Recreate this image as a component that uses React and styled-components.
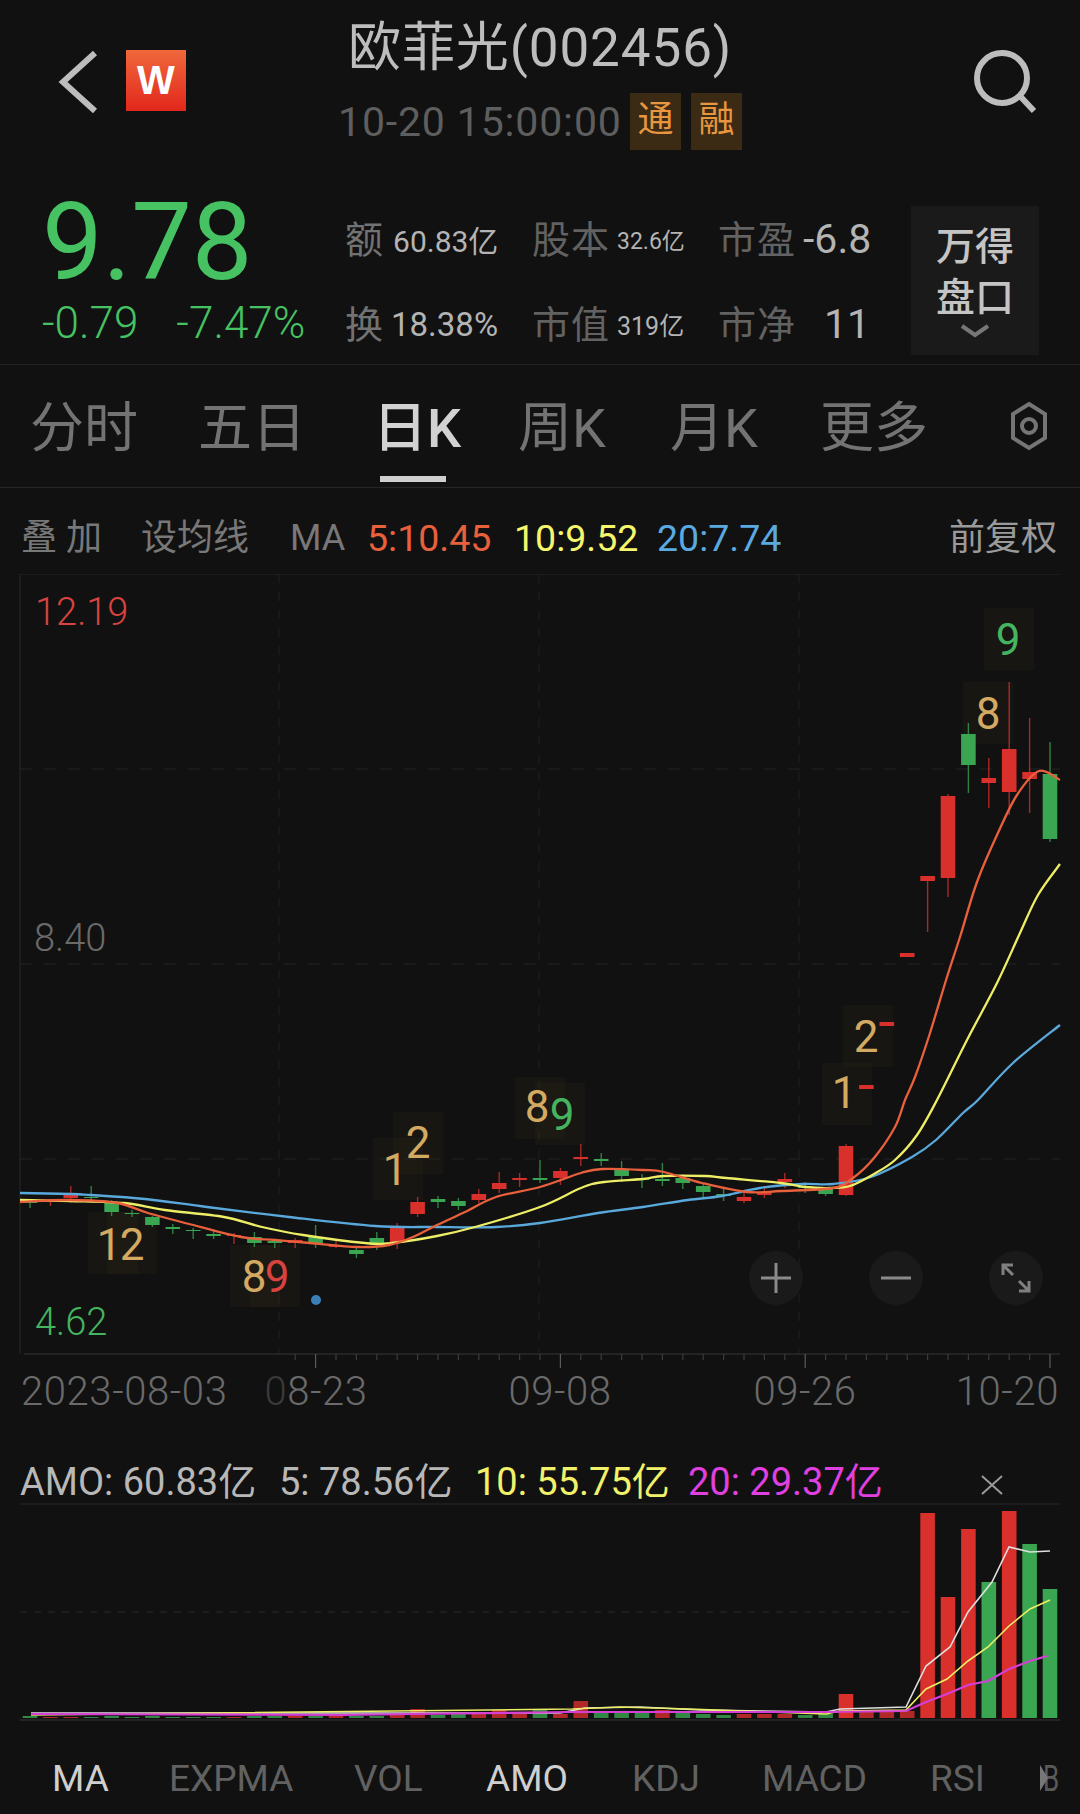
import React from 'react'
import styled, { createGlobalStyle } from 'styled-components'

const GlobalStyle = createGlobalStyle`
  html, body { margin: 0; padding: 0; background: #111111; }
  body { font-family: Roboto, "Noto Sans CJK SC", sans-serif; }
`

const GRAY = '#6a6a6a'
const RED = '#d9302c'
const GREEN = '#3aa651'
const GOLD = '#d4aa63'

// x position of the n-th daily bar
const barX = (i) => 30 + 20.4 * i

// [index, colour, wick top, wick bottom, body top, body bottom]
const candles = [
  [0, 'g', 1199, 1208, 1201, 1203], [1, 'r', 1199, 1206, 1200, 1202], [2, 'r', 1186, 1203, 1194, 1198],
  [3, 'g', 1186, 1200, 1197, 1198], [4, 'g', 1200, 1216, 1203, 1212], [5, 'g', 1210, 1217, 1213, 1214],
  [6, 'g', 1216, 1227, 1217, 1225], [7, 'g', 1224, 1234, 1227, 1229], [8, 'g', 1228, 1239, 1230, 1231],
  [9, 'g', 1231, 1239, 1234, 1236], [10, 'r', 1233, 1244, 1235, 1236], [11, 'g', 1232, 1247, 1237, 1243],
  [12, 'g', 1240, 1248, 1241, 1243], [13, 'r', 1238, 1248, 1240, 1243], [14, 'g', 1225, 1248, 1237, 1243],
  [15, 'r', 1241, 1248, 1245, 1247], [16, 'g', 1247, 1258, 1250, 1254], [17, 'g', 1232, 1250, 1238, 1245],
  [18, 'r', 1223, 1249, 1228, 1243], [19, 'r', 1197, 1217, 1202, 1214], [20, 'g', 1196, 1208, 1199, 1202],
  [21, 'g', 1198, 1210, 1201, 1206], [22, 'r', 1189, 1203, 1194, 1200], [23, 'r', 1172, 1193, 1183, 1189],
  [24, 'r', 1173, 1187, 1178, 1180], [25, 'g', 1160, 1183, 1178, 1180], [26, 'r', 1168, 1185, 1171, 1178],
  [27, 'r', 1144, 1166, 1157, 1159], [28, 'g', 1153, 1166, 1159, 1161], [29, 'g', 1161, 1182, 1170, 1176],
  [30, 'g', 1174, 1188, 1178, 1180], [31, 'g', 1163, 1186, 1179, 1181], [32, 'g', 1177, 1189, 1178, 1183],
  [33, 'g', 1183, 1197, 1186, 1192], [34, 'g', 1188, 1201, 1194, 1196], [35, 'r', 1193, 1203, 1197, 1201],
  [36, 'r', 1186, 1198, 1192, 1195], [37, 'r', 1173, 1188, 1179, 1182], [38, 'g', 1182, 1193, 1186, 1188],
  [39, 'g', 1187, 1196, 1189, 1194], [40, 'r', 1144, 1196, 1146, 1195], [41, 'r', 1085, 1089, 1085, 1089],
  [42, 'r', 1022, 1026, 1022, 1026], [43, 'r', 953, 957, 953, 957], [44, 'r', 876, 932, 876, 881],
  [45, 'r', 794, 897, 796, 878], [46, 'g', 723, 793, 734, 765], [47, 'r', 758, 808, 778, 783],
  [48, 'r', 682, 815, 749, 792], [49, 'r', 718, 813, 772, 779], [50, 'g', 742, 842, 774, 839],
]

const ma5 = [[20, 1202], [70, 1200], [117, 1203], [148, 1213], [189, 1224], [241, 1237], [275, 1240], [310, 1243], [358, 1247], [389, 1245], [413, 1237], [437, 1225], [465, 1212], [496, 1197], [540, 1187], [581, 1173], [602, 1169], [643, 1170], [664, 1172], [702, 1183], [747, 1192], [781, 1191], [833, 1188], [853, 1178], [874, 1158], [895, 1127], [905, 1100], [915, 1077], [930, 1033], [947, 977], [960, 937], [977, 882], [997, 835], [1017, 795], [1039, 771], [1060, 780]]
const ma10 = [[20, 1200], [70, 1201], [124, 1203], [165, 1210], [224, 1217], [262, 1227], [303, 1235], [365, 1243], [392, 1243], [437, 1236], [475, 1227], [540, 1207], [581, 1188], [604, 1182], [643, 1179], [664, 1176], [705, 1176], [726, 1178], [781, 1183], [805, 1187], [831, 1188], [850, 1186], [874, 1174], [895, 1160], [917, 1135], [937, 1100], [967, 1040], [997, 983], [1020, 933], [1038, 895], [1060, 864]]
const ma20 = [[20, 1193], [71, 1194], [91, 1195], [145, 1199], [207, 1207], [289, 1217], [375, 1226], [437, 1227], [496, 1227], [540, 1223], [598, 1213], [643, 1207], [688, 1200], [722, 1196], [760, 1188], [802, 1184], [833, 1184], [871, 1177], [912, 1157], [936, 1140], [963, 1113], [978, 1100], [1013, 1063], [1060, 1025]]

// the TD sequence counters drawn next to the candles
const marks = [
  { boxes: [[88, 1212], [107, 1212]], text: '1', x: 109, y: 1260, color: GOLD },
  { boxes: [], text: '2', x: 132, y: 1260, color: GOLD },
  { boxes: [[230, 1245], [250, 1245]], text: '8', x: 254, y: 1292, color: GOLD },
  { boxes: [], text: '9', x: 277, y: 1292, color: '#d8433f' },
  { boxes: [[373, 1138]], text: '1', x: 395, y: 1185, color: GOLD },
  { boxes: [[393, 1112]], text: '2', x: 418, y: 1158, color: GOLD },
  { boxes: [[515, 1077]], text: '8', x: 537, y: 1122, color: GOLD },
  { boxes: [[535, 1083]], text: '9', x: 562, y: 1130, color: '#45b45f' },
  { boxes: [[822, 1063]], text: '1', x: 844, y: 1108, color: GOLD },
  { boxes: [[843, 1005]], text: '2', x: 866, y: 1052, color: GOLD },
  { boxes: [[984, 608]], text: '9', x: 1008, y: 655, color: '#45b45f' },
  { boxes: [[963, 682]], text: '8', x: 988, y: 729, color: GOLD },
]

// [index, colour, bar top]
const volumes = [
  [0, 'g', 1717], [1, 'r', 1718], [2, 'r', 1718], [3, 'g', 1718], [4, 'g', 1717], [5, 'g', 1718], [6, 'g', 1717],
  [7, 'g', 1718], [8, 'g', 1718], [9, 'g', 1718], [10, 'r', 1718], [11, 'g', 1717], [12, 'g', 1717], [13, 'r', 1717],
  [14, 'g', 1717], [15, 'r', 1717], [16, 'g', 1717], [17, 'g', 1717], [18, 'r', 1715], [19, 'r', 1710], [20, 'g', 1716],
  [21, 'g', 1715], [22, 'r', 1715], [23, 'r', 1711], [24, 'r', 1715], [25, 'g', 1710], [26, 'r', 1715], [27, 'r', 1702],
  [28, 'g', 1713], [29, 'g', 1713], [30, 'g', 1713], [31, 'r', 1711], [32, 'g', 1713], [33, 'g', 1715], [34, 'g', 1716],
  [35, 'r', 1715], [36, 'r', 1715], [37, 'r', 1715], [38, 'g', 1716], [39, 'g', 1715], [40, 'r', 1695], [41, 'r', 1712],
  [42, 'r', 1712], [43, 'r', 1712], [44, 'r', 1514], [45, 'r', 1598], [46, 'r', 1530], [47, 'g', 1583], [48, 'r', 1512],
  [49, 'g', 1545], [50, 'g', 1590],
]

const vol5 = [[31, 1714], [560, 1714], [585, 1709], [640, 1708], [700, 1711], [826, 1713], [840, 1710], [906, 1708], [926, 1667], [950, 1648], [968, 1613], [992, 1583], [1009, 1548], [1030, 1553], [1050, 1552]]
const vol10 = [[31, 1716], [572, 1710], [620, 1708], [689, 1710], [826, 1715], [840, 1712], [906, 1711], [926, 1690], [947, 1680], [968, 1662], [988, 1648], [1009, 1627], [1030, 1610], [1050, 1601]]
const vol20 = [[31, 1715], [344, 1716], [413, 1715], [572, 1713], [826, 1713], [906, 1712], [926, 1703], [947, 1695], [968, 1686], [988, 1682], [1009, 1670], [1030, 1662], [1047, 1657]]

const polyline = (pts) => pts.map((p) => p.join(',')).join(' ')

// catmull-rom through the sampled points so the averages stay round
const smooth = (pts) => {
  let d = `M${pts[0][0]} ${pts[0][1]}`
  for (let i = 0; i < pts.length - 1; i++) {
    const p0 = pts[i - 1] || pts[i]
    const p1 = pts[i]
    const p2 = pts[i + 1]
    const p3 = pts[i + 2] || p2
    const c1x = p1[0] + (p2[0] - p0[0]) / 6
    const c1y = p1[1] + (p2[1] - p0[1]) / 6
    const c2x = p2[0] - (p3[0] - p1[0]) / 6
    const c2y = p2[1] - (p3[1] - p1[1]) / 6
    d += ` C${c1x.toFixed(1)} ${c1y.toFixed(1)} ${c2x.toFixed(1)} ${c2y.toFixed(1)} ${p2[0]} ${p2[1]}`
  }
  return d
}

const Page = styled.div`
  width: 1080px;
  height: 1814px;
  overflow: hidden;
  background: #111111;
  color: #bbbbbb;
`

const TopBar = styled.header`
  height: 170px;
  display: grid;
  grid-template-columns: 338px 600px 1fr;
`
const TopLeft = styled.div`
  display: flex;
  align-items: flex-start;
  gap: 26px;
  padding: 50px 0 0 57px;
`
const Logo = styled.div`
  width: 60px;
  height: 61px;
  background: linear-gradient(#f0683c, #e2271c);
  color: #fff;
  font: 700 40px/61px "Liberation Sans", sans-serif;
  text-align: center;
`
const TopCenter = styled.div`
  padding-top: 16px;
`
const Title = styled.div`
  margin-left: 10px;
  font-size: 53px;
  line-height: 64px;
  letter-spacing: 0.9px;
  color: #bdbdbd;
`
const TimeRow = styled.div`
  display: flex;
  align-items: center;
  margin-top: 13px;
  height: 57px;
`
const Time = styled.span`
  width: 292px;
  font-size: 41px;
  letter-spacing: 0.85px;
  color: #5e5e5e;
  white-space: nowrap;
`
const Badge = styled.span`
  width: 51px;
  height: 57px;
  margin-right: 10px;
  background: #3b2a14;
  color: #e8963f;
  font-size: 36px;
  line-height: 55px;
  text-align: center;
`
const TopRight = styled.div`
  padding: 49px 0 0 33px;
`

const Quote = styled.section`
  height: 195px;
  display: grid;
  grid-template-columns: 345px 566px 128px;
  border-bottom: 1px solid #222222;
  box-sizing: border-box;
`
const PriceBlock = styled.div`
  padding-left: 42px;
  color: #46c263;
`
const Price = styled.div`
  font-size: 108px;
  line-height: 96px;
  margin-top: 24px;
`
const Change = styled.div`
  display: flex;
  gap: 38px;
  margin-top: 11px;
  font-size: 44px;
  font-weight: 300;
  line-height: 44px;
`
const Stats = styled.div`
  display: grid;
  grid-template-columns: 187px 186px 193px;
  grid-auto-rows: 85px;
  padding-top: 25px;
`
const Stat = styled.div`
  display: flex;
  align-items: center;
  height: 85px;
  gap: ${(p) => p.$gap || 7}px;
`
const StatLabel = styled.span`
  margin-top: -3px;
  font-size: 38px;
  color: ${(p) => p.$color || '#626262'};
  letter-spacing: 1px;
`
const StatValue = styled.span`
  margin-top: 3px;
  font-size: ${(p) => p.$size || 32}px;
  color: #b4b4b4;
  white-space: nowrap;
`
const DepthButton = styled.div`
  height: 149px;
  margin-top: 36px;
  background: #1a1a1a;
  display: flex;
  flex-direction: column;
  align-items: center;
  padding-top: 16px;
  box-sizing: border-box;
  font-size: 39px;
  font-weight: 500;
  line-height: 51px;
  color: #c4c4c4;
`

const Tabs = styled.nav`
  height: 123px;
  box-sizing: border-box;
  padding: 31px 0 0 30px;
  display: grid;
  grid-template-columns: 168px 175px 145px 152px 150px 190px 38px;
  border-bottom: 1px solid #262626;
  position: relative;
`
const Tab = styled.span`
  position: relative;
  font-size: 54px;
  line-height: 66px;
  color: ${(p) => (p.$active ? '#d2d2d2' : '#737373')};
  font-weight: ${(p) => (p.$active ? 500 : 400)};
`
const TabLine = styled.i`
  position: absolute;
  left: 7px;
  top: 80px;
  width: 66px;
  height: 6px;
  background: #cfcfcf;
`
const GearWrap = styled.span`
  margin-top: -3px;
`

const MaRow = styled.div`
  height: 86px;
  box-sizing: border-box;
  padding: 27px 0 0 21px;
  display: grid;
  grid-template-columns: 120px 149px 77px 147px 143px 292px 1fr;
  font-size: 36px;
  line-height: 46px;
  color: #787878;
  white-space: nowrap;
`
const MaValue = styled.span`
  color: ${(p) => p.$color};
  font-size: ${(p) => p.$size || 37.5}px;
`

const ChartWrap = styled.div`
  position: relative;
  height: 865px;
`
const ChartSvg = styled.svg`
  display: block;
`
const ChartText = styled.text`
  font-family: Roboto, sans-serif;
  font-size: ${(p) => p.$size || 38}px;
  font-weight: ${(p) => p.$weight || 300};
  letter-spacing: ${(p) => p.$spacing || 0}px;
  fill: ${(p) => p.$color};
  text-anchor: ${(p) => p.$anchor || 'start'};
`
const ZoomTools = styled.div`
  position: absolute;
  left: 749px;
  top: 677px;
  display: flex;
  gap: 66px;
`
const ZoomButton = styled.div`
  width: 54px;
  height: 54px;
  border-radius: 50%;
  background: #1a1a1a;
  display: flex;
  align-items: center;
  justify-content: center;
`

const AmoRow = styled.div`
  height: 63px;
  box-sizing: border-box;
  padding: 21px 0 0 20px;
  display: grid;
  grid-template-columns: 259px 196px 213px 292px 1fr;
  font-size: 38px;
  line-height: 44px;
  white-space: nowrap;
  color: #b8b8b8;
`
const AmoValue = styled.span`
  color: ${(p) => p.$color || 'inherit'};
`
const VolumeSvg = styled.svg`
  display: block;
`
const BottomTabs = styled.nav`
  height: 84px;
  box-sizing: border-box;
  padding: 28px 0 0 52px;
  display: grid;
  grid-template-columns: 117px 185px 132px 146px 130px 168px 110px 20px;
  font-size: 37px;
  line-height: 44px;
`
const BottomTab = styled.span`
  color: ${(p) => (p.$active ? '#cfcfcf' : '#616161')};
`
const SqueezedTab = styled.span`
  position: relative;
  padding-left: 3px;
  color: #5a5a5a;
`
const SqueezedLetter = styled.span`
  display: inline-block;
  transform: scaleX(0.7);
  transform-origin: left;
`
const MoreArrow = styled.i`
  position: absolute;
  left: 0;
  top: 8px;
  width: 0;
  height: 0;
  border-left: 8px solid #777777;
  border-top: 13px solid transparent;
  border-bottom: 13px solid transparent;
`

const Stroke = ({ children, w, h, color = '#bdbdbd', sw = 6 }) => (
  <svg width={w} height={h} viewBox={`0 0 ${w} ${h}`} fill="none" stroke={color} strokeWidth={sw}>
    {children}
  </svg>
)

const PriceChart = () => (
  <ChartSvg width="1080" height="865" viewBox="0 574 1080 865" fill="none">
    <path d="M20 574H1060M20 574V1354" stroke="#202020" strokeWidth="1.5" />
    <path d="M20 769H1060M20 964H1060M20 1159H1060" stroke="#242424" strokeWidth="1" strokeDasharray="12 12" />
    <path d="M279 574V1354M539 574V1354M799 574V1354" stroke="#212121" strokeWidth="1" strokeDasharray="9 9" />

    {marks.flatMap((m) => m.boxes).map((b) => (
      <rect key={b.join()} x={b[0]} y={b[1]} width="50" height="62" fill="#3a3220" opacity="0.17" />
    ))}

    {candles.map(([i, c, wt, wb, bt, bb]) => (
      <g key={i} fill={c === 'r' ? RED : GREEN} stroke="none">
        <rect x={barX(i) - 0.7} y={wt} width="1.4" height={wb - wt} opacity="0.75" />
        <rect x={barX(i) - 7.3} y={bt} width="14.6" height={bb - bt} />
      </g>
    ))}

    <path d={smooth(ma20)} stroke="#5aa9dc" strokeWidth="2.3" />
    <path d={smooth(ma10)} stroke="#eded66" strokeWidth="2.3" />
    <path d={smooth(ma5)} stroke="#e8603c" strokeWidth="2.3" />

    {marks.map((m) => (
      <ChartText key={`${m.x}-${m.text}`} x={m.x} y={m.y} $size={44} $weight={400} $color={m.color} $anchor="middle">
        {m.text}
      </ChartText>
    ))}

    <ChartText x="35" y="625" $color="#d8433f">12.19</ChartText>
    <ChartText x="34" y="951" $color="#6a6a6a">8.40</ChartText>
    <ChartText x="35" y="1335" $color="#45b45f">4.62</ChartText>
    <circle cx="316" cy="1300" r="5" fill="#3a7fb5" />

    <path d="M24 1354H1060" stroke="#2a2a2a" strokeWidth="1.5" />
    {candles.filter(([i]) => i >= 13).map(([i]) => (
      <rect
        key={i}
        x={barX(i) - 0.6}
        y="1354"
        width="1.2"
        height={[14, 26, 38, 50].includes(i) ? 14 : 6}
        fill={[14, 26, 38, 50].includes(i) ? '#5a5a5a' : '#3c3c3c'}
      />
    ))}

    <ChartText x="21" y="1405" $size={40} $spacing={0.6} $color={GRAY}>2023-08-03</ChartText>
    <ChartText x="316" y="1405" $size={40} $spacing={0.6} $color={GRAY} $anchor="middle">
      <tspan fill="#3a3a3a">0</tspan>8-23
    </ChartText>
    <ChartText x="560" y="1405" $size={40} $spacing={0.6} $color={GRAY} $anchor="middle">09-08</ChartText>
    <ChartText x="805" y="1405" $size={40} $spacing={0.6} $color={GRAY} $anchor="middle">09-26</ChartText>
    <ChartText x="1059" y="1405" $size={40} $spacing={0.6} $color={GRAY} $anchor="end">10-20</ChartText>
  </ChartSvg>
)

const VolumeChart = () => (
  <VolumeSvg width="1080" height="227" viewBox="0 1503 1080 227" fill="none">
    <path d="M20 1505H1060" stroke="#202020" strokeWidth="1.5" />
    <path d="M20 1613H915" stroke="#2a2a2a" strokeWidth="1" strokeDasharray="7 7" />
    <path d="M20 1721H1060" stroke="#2a2a2a" strokeWidth="1.5" />
    {volumes.map(([i, c, top]) => (
      <rect
        key={i}
        x={barX(i) - 7.3}
        y={top}
        width="14.6"
        height={1719 - top}
        fill={c === 'r' ? RED : GREEN}
        opacity={i < 44 && i !== 40 ? 0.8 : 1}
      />
    ))}
    <polyline points={polyline(vol5)} stroke="#dedede" strokeWidth="1.6" />
    <polyline points={polyline(vol10)} stroke="#eded66" strokeWidth="1.6" />
    <polyline points={polyline(vol20)} stroke="#d63fd6" strokeWidth="2.2" />
  </VolumeSvg>
)

export default function App() {
  return (
    <Page>
      <GlobalStyle />
      <TopBar>
        <TopLeft>
          <Stroke w={43} h={64}>
            <path d="M38 3L6 32L38 61" />
          </Stroke>
          <Logo>W</Logo>
        </TopLeft>
        <TopCenter>
          <Title>欧菲光(002456)</Title>
          <TimeRow>
            <Time>10-20 15:00:00</Time>
            <Badge>通</Badge>
            <Badge>融</Badge>
          </TimeRow>
        </TopCenter>
        <TopRight>
          <Stroke w={66} h={66}>
            <circle cx="31" cy="29" r="25" />
            <path d="M48 46L63 62" />
          </Stroke>
        </TopRight>
      </TopBar>

      <Quote>
        <PriceBlock>
          <Price>9.78</Price>
          <Change>
            <span>-0.79</span>
            <span>-7.47%</span>
          </Change>
        </PriceBlock>
        <Stats>
          <Stat $gap={9}>
            <StatLabel $color="#727272">额</StatLabel>
            <StatValue $size={30}>60.83亿</StatValue>
          </Stat>
          <Stat>
            <StatLabel>股本</StatLabel>
            <StatValue $size={23}>32.6亿</StatValue>
          </Stat>
          <Stat>
            <StatLabel>市盈</StatLabel>
            <StatValue $size={41}>-6.8</StatValue>
          </Stat>
          <Stat $gap={7}>
            <StatLabel $color="#727272">换</StatLabel>
            <StatValue $size={33}>18.38%</StatValue>
          </Stat>
          <Stat>
            <StatLabel>市值</StatLabel>
            <StatValue $size={25}>319亿</StatValue>
          </Stat>
          <Stat $gap={28}>
            <StatLabel>市净</StatLabel>
            <StatValue $size={41}>11</StatValue>
          </Stat>
        </Stats>
        <DepthButton>
          <span>万得</span>
          <span>盘口</span>
          <Stroke w={30} h={14} color="#777" sw={4}>
            <path d="M2 2L15 11L28 2" />
          </Stroke>
        </DepthButton>
      </Quote>

      <Tabs>
        <Tab>分时</Tab>
        <Tab>五日</Tab>
        <Tab $active>
          日K
          <TabLine />
        </Tab>
        <Tab>周K</Tab>
        <Tab>月K</Tab>
        <Tab>更多</Tab>
        <GearWrap>
          <Stroke w={38} h={66} color="#757575" sw={4}>
            <path d="M19 11L35 21V45L19 55L3 45V21Z" />
            <circle cx="19" cy="33" r="7" />
          </Stroke>
        </GearWrap>
      </Tabs>

      <MaRow>
        <span>叠 加</span>
        <span>设均线</span>
        <span>MA</span>
        <MaValue $color="#e8603c">5:10.45</MaValue>
        <MaValue $color="#f6f66c">10:9.52</MaValue>
        <MaValue $color="#5aa9e0">20:7.74</MaValue>
        <MaValue $color="#9a9a9a" $size={36}>前复权</MaValue>
      </MaRow>

      <ChartWrap>
        <PriceChart />
        <ZoomTools>
          <ZoomButton>
            <Stroke w={32} h={32} color="#8a8a8a" sw={3}>
              <path d="M16 1V31M1 16H31" />
            </Stroke>
          </ZoomButton>
          <ZoomButton>
            <Stroke w={32} h={32} color="#8a8a8a" sw={3}>
              <path d="M1 16H31" />
            </Stroke>
          </ZoomButton>
          <ZoomButton>
            <Stroke w={32} h={32} color="#808080" sw={3}>
              <path d="M3 3L13 13M19 19L29 29M3 13V3H13M29 19V29H19" />
            </Stroke>
          </ZoomButton>
        </ZoomTools>
      </ChartWrap>

      <AmoRow>
        <span>AMO: 60.83亿</span>
        <span>5: 78.56亿</span>
        <AmoValue $color="#f2f26a">10: 55.75亿</AmoValue>
        <AmoValue $color="#e040e0">20: 29.37亿</AmoValue>
        <span>
          <Stroke w={24} h={22} color="#9a9a9a" sw={2}>
            <path d="M2 3L22 21M22 3L2 21" />
          </Stroke>
        </span>
      </AmoRow>

      <VolumeChart />

      <BottomTabs>
        <BottomTab $active>MA</BottomTab>
        <BottomTab>EXPMA</BottomTab>
        <BottomTab>VOL</BottomTab>
        <BottomTab $active>AMO</BottomTab>
        <BottomTab>KDJ</BottomTab>
        <BottomTab>MACD</BottomTab>
        <BottomTab>RSI</BottomTab>
        <SqueezedTab>
          <SqueezedLetter>B</SqueezedLetter>
          <MoreArrow />
        </SqueezedTab>
      </BottomTabs>
    </Page>
  )
}
